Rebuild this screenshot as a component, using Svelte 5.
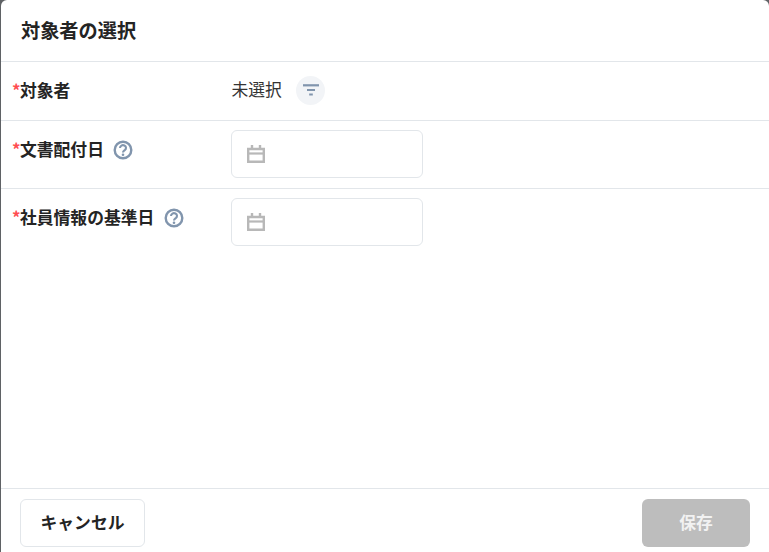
<script>
  const dateRows = [
    { label: '文書配付日' },
    { label: '社員情報の基準日' }
  ];
</script>

<div class="backdrop">
  <div class="modal">
    <header class="head"><h1>対象者の選択</h1></header>
    <main class="body">
      <div class="row first">
        <div class="label"><span class="req">*</span>対象者</div>
        <div class="value">
          <span class="status">未選択</span>
          <button class="filter" aria-label="filter">
            <svg width="16" height="16" viewBox="0 0 16 16">
              <rect x="0" y="2.2" width="16" height="2.2" fill="#8195ad" />
              <rect x="4" y="7" width="8" height="2" fill="#8195ad" />
              <rect x="6.2" y="11.5" width="3.6" height="2" fill="#8195ad" />
            </svg>
          </button>
        </div>
      </div>
      {#each dateRows as r}
        <div class="row date">
          <div class="label">
            <span class="req">*</span>{r.label}
            <svg class="help" width="20" height="20" viewBox="0 0 20 20">
              <circle cx="10" cy="10" r="8.3" fill="none" stroke="#8195ad" stroke-width="2.4" />
              <path d="M7 8a3 2.8 0 1 1 4.6 2.3c-1 .7-1.6 1-1.6 2.3" fill="none" stroke="#8195ad" stroke-width="2.1" />
              <circle cx="10" cy="14.8" r="1.3" fill="#8195ad" />
            </svg>
          </div>
          <div class="input">
            <svg width="18" height="18" viewBox="0 0 18 18">
              <path d="M1.2 4h15.6v12.8h-15.6z" fill="none" stroke="#b8b8b8" stroke-width="2.4" />
              <path d="M1 8.5h16" stroke="#b8b8b8" stroke-width="2.2" />
              <path d="M5 0v4M13 0v4" stroke="#b8b8b8" stroke-width="2.4" />
            </svg>
          </div>
        </div>
      {/each}
    </main>
    <footer class="foot">
      <button class="cancel">キャンセル</button>
      <button class="save" disabled>保存</button>
    </footer>
  </div>
</div>

<style>
  :global(body) { margin: 0; }
  .backdrop {
    width: 769px;
    height: 552px;
    background: #5f6265;
    padding-left: 1px;
    box-sizing: border-box;
    overflow: hidden;
    font-family: "Noto Sans CJK JP", "Noto Sans", sans-serif;
    color: #242424;
  }
  .modal {
    height: 552px;
    background: #fff;
    border-radius: 6px 6px 0 0;
    display: flex;
    flex-direction: column;
  }
  .head {
    height: 61px;
    padding-left: 20px;
    border-bottom: 1px solid #e2e6ea;
    display: flex;
    align-items: center;
    flex: none;
  }
  h1 { margin: 0; font-size: 19.2px; font-weight: 700; line-height: 24px; position: relative; top: -1px; }
  .body { flex: 1; min-height: 0; }
  .row {
    display: flex;
    padding-left: 11px;
    border-bottom: 1px solid #e2e6ea;
  }
  .row:last-child { border-bottom: 0; }
  .first { height: 58px; align-items: center; }
  .date { height: 67px; }
  .date:last-child { height: 60px; }
  .label {
    width: 219px;
    flex: none;
    font-size: 16.8px;
    font-weight: 700;
    line-height: 22px;
    display: flex;
    align-items: center;
  }
  .date .label { height: 22px; margin-top: 17px; }
  .first .label { position: relative; top: -1px; }
  .req { color: #ff4d4f; font-weight: 700; width: 8px; flex: none; }
  .help { margin-left: 10px; flex: none; position: relative; top: 0.5px; left: -0.5px; }
  .value { display: flex; align-items: center; }
  .status { font-size: 16.8px; line-height: 22px; color: #333; position: relative; top: -2px; left: 0.5px; }
  .filter {
    width: 29px;
    height: 29px;
    margin-left: 15px;
    border: 0;
    padding: 0;
    border-radius: 50%;
    background: #f2f4f7;
    display: flex;
    align-items: center;
    justify-content: center;
    position: relative;
    top: -1px;
  }
  .input {
    width: 175px;
    height: 46px;
    margin-top: 9px;
    border: 1px solid #e2e6ea;
    border-radius: 6px;
    display: flex;
    align-items: center;
    padding-left: 15px;
  }
  .foot {
    height: 64px;
    border-top: 1px solid #e2e6ea;
    flex: none;
    display: flex;
    justify-content: space-between;
    align-items: flex-start;
    padding: 10px 19px 0 19px;
    box-sizing: border-box;
  }
  button { font-family: inherit; }
  .cancel, .save {
    height: 48px;
    border-radius: 6px;
    font-size: 16.8px;
    font-weight: 700;
    padding: 0 0 2px;
  }
  .cancel {
    width: 125px;
    background: #fff;
    border: 1px solid #e2e6ea;
    color: #242424;
  }
  .save {
    width: 108px;
    background: #bdbdbd;
    border: 0;
    color: #f2f2f2;
  }
</style>
